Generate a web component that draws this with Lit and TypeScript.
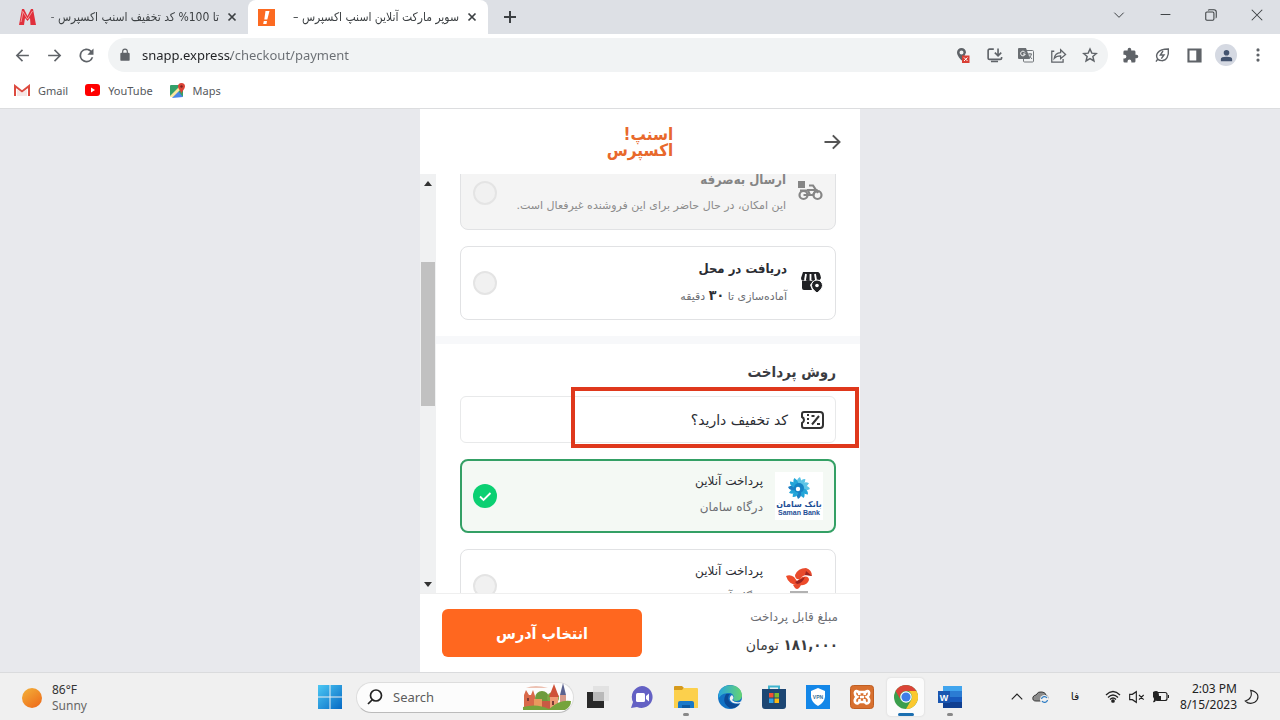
import { LitElement, html, css, svg } from "lit";
import { customElement, state } from "lit/decorators.js";
import { classMap } from "lit/directives/class-map.js";

const ui = css`
  :host {
    display: block;
    box-sizing: border-box;
    font-family: "Noto Sans", "DejaVu Sans", sans-serif;
    color: #3c4043;
  }
  * {
    box-sizing: border-box;
  }
  button {
    border: 0;
    padding: 0;
    background: none;
    color: inherit;
    font: inherit;
    display: grid;
    place-items: center;
    cursor: pointer;
  }
  svg {
    display: block;
  }
`;

const line = (d: string, size = 24, width = 2) => html`<svg
  width=${size}
  height=${size}
  viewBox="0 0 24 24"
  fill="none"
  stroke="currentColor"
  stroke-width=${width}
>
  <path d=${d} />
</svg>`;

const solid = (d: string, size = 24) => html`<svg
  width=${size}
  height=${size}
  viewBox="0 0 24 24"
  fill="currentColor"
>
  <path fill-rule="evenodd" d=${d} />
</svg>`;

@customElement("browser-chrome")
class BrowserChrome extends LitElement {
  static styles = [
    ui,
    css`
      .strip {
        display: flex;
        height: 34px;
        background: #dde0e5;
      }
      .tab {
        display: flex;
        align-items: center;
        gap: 7px;
        width: 240px;
        padding: 0 10px;
        font-family: "DejaVu Sans Condensed", "DejaVu Sans", sans-serif;
        font-size: 12px;
      }
      .tab.first {
        width: 248px;
        padding: 0 10px 0 18px;
      }
      .tab.active {
        background: #fff;
        border-radius: 8px 8px 0 0;
      }
      .tab-title {
        flex: 1;
        height: 34px;
        overflow: hidden;
        white-space: nowrap;
        direction: rtl;
        line-height: 34px;
        text-align: right;
        mask-image: linear-gradient(90deg, transparent, #000 12px);
      }
      .close {
        width: 12px;
        height: 24px;
      }
      .new-tab {
        width: 44px;
      }
      .window {
        display: flex;
        margin-left: auto;
      }
      .window button {
        width: 46px;
        height: 29px;
      }
      .bar {
        display: flex;
        align-items: center;
        height: 42px;
        padding: 0 6px;
        background: #fff;
        color: #5f6368;
      }
      .nav {
        width: 32px;
        height: 32px;
      }
      .omnibox {
        flex: 1;
        display: flex;
        align-items: center;
        height: 34px;
        margin: 0 6px;
        padding: 0 2px 0 10px;
        border-radius: 17px;
        background: #f1f3f4;
      }
      .url {
        flex: 1;
        min-width: 0;
        margin-left: 10px;
        padding: 0;
        border: 0;
        outline: 0;
        font: 13px "Noto Sans", sans-serif;
        color: transparent;
        background: linear-gradient(90deg, #202124 89px, #696d72 89px);
        background-clip: text;
        -webkit-background-clip: text;
      }
      .avatar {
        width: 22px;
        height: 22px;
        border-radius: 50%;
        background: #d5d9e2;
        color: #44546f;
        display: grid;
        place-items: center;
      }
      .bookmarks {
        display: flex;
        align-items: center;
        gap: 17px;
        height: 33px;
        padding: 0 14px 4px;
        border-bottom: 1px solid #dcdddf;
        background: #fff;
        font-size: 11px;
      }
      .bookmarks a {
        display: flex;
        align-items: center;
        gap: 8px;
        color: #55585c;
        text-decoration: none;
      }
    `,
  ];

  render() {
    const x = line("M5 5L19 19M19 5L5 19", 12, 3.4);
    return html`
      <div class="strip" role="tablist">
        <div class="tab first" role="tab" aria-selected="false">
          <svg width="19" height="18" viewBox="0 0 19 18">
            <path d="M1 17L4 1H6L9.500 8L13 1H15L18 17H12.500L12 10L9.500 13L7 10L6 17Z" fill="#e0303c" />
            <path d="M4.500 3L9.500 11L14.500 3M3 14L5 4" fill="none" stroke="#f6b0b0" stroke-width="0.800" />
          </svg>
          <span class="tab-title">تا 100% کد تخفیف اسنپ اکسپرس -</span>
          <button class="close" aria-label="Close tab">${x}</button>
        </div>
        <div class="tab active" role="tab" aria-selected="true">
          <svg width="17" height="17" viewBox="0 0 17 17">
            <rect width="17" height="17" fill="#fc6a21" />
            <path d="M7.500 2H11.500L9.300 10.500H6.300ZM5.800 12H9L8.500 15H5.200Z" fill="#fff" />
          </svg>
          <span class="tab-title">سوپر مارکت آنلاین اسنپ اکسپرس –</span>
          <button class="close" aria-label="Close tab">${x}</button>
        </div>
        <button class="new-tab" aria-label="New tab">${line("M12 3V21M3 12H21", 16, 3)}</button>
        <div class="window">
          <button aria-label="Search tabs">${line("M4 8L12 16L20 8", 14, 1.7)}</button>
          <button aria-label="Minimize">${line("M3 12H21", 13, 1.8)}</button>
          <button aria-label="Restore">
            ${line("M3 9Q3 7 5 7H15Q17 7 17 9V19Q17 21 15 21H5Q3 21 3 19ZM7 4Q8 3 9 3H17Q21 3 21 7V15Q21 17 20 17", 14, 1.8)}
          </button>
          <button aria-label="Close">${line("M3 3L21 21M21 3L3 21", 14, 1.8)}</button>
        </div>
      </div>
      <div class="bar">
        <button class="nav" aria-label="Back">${line("M21 12H4M12 4L4 12L12 20", 17, 2.2)}</button>
        <button class="nav" aria-label="Forward">${line("M3 12H20M12 4L20 12L12 20", 17, 2.2)}</button>
        <button class="nav" aria-label="Reload">
          ${solid("M17.650 6.350A8 8 0 1 0 19.730 14H17.650A6 6 0 1 1 12 6C13.660 6 15.140 6.690 16.220 7.780L13 11H20V4Z", 21)}
        </button>
        <div class="omnibox">
          ${solid("M18 8H17V6A5 5 0 0 0 7 6V8H6Q4 8 4 10V20Q4 22 6 22H18Q20 22 20 20V10Q20 8 18 8ZM9 8V6A3 3 0 0 1 15 6V8Z", 14)}
          <input class="url" aria-label="Address" value="snapp.express/checkout/payment" />
          <button class="nav" aria-label="Location blocked">
            <svg width="16" height="18" viewBox="0 0 16 18">
              <path fill="#5f6368" fill-rule="evenodd" d="M7.500 2A4.500 4.500 0 0 0 3 6.500C3 9.500 6 12.500 7.500 14.500L10 11L12 6.500A4.500 4.500 0 0 0 7.500 2ZM7.500 4.500A2 2 0 1 1 7.500 8.500A2 2 0 1 1 7.500 4.500Z" />
              <rect x="8" y="9.500" width="7.500" height="7.500" fill="#d93f35" />
              <path d="M10 11.500L13.500 15M13.500 11.500L10 15" stroke="#fff" />
            </svg>
          </button>
          <button class="nav" aria-label="Install">
            ${line("M11 3H5Q3 3 3 5V16Q3 17.500 5 17.500H20Q22 17.500 22 16V14M7 20.500H17M17 2V12M12.500 8L17 12.500L21.500 8", 17, 2.3)}
          </button>
          <button class="nav" aria-label="Translate">
            <svg width="16" height="16" viewBox="0 0 16 16">
              <rect x="5.500" y="3.500" width="10" height="11.500" rx="1" fill="#f1f3f4" stroke="#73777b" />
              <path d="M1 1H8L12 12H1Q0 12 0 11V2Q0 1 1 1Z" fill="#6a6e72" />
              <path d="M7 5.500A2.300 2.300 0 1 0 7.200 7H5" fill="none" stroke="#fff" />
              <path d="M9.500 7H14M12 6V7M13.500 7Q13 10 10.500 11.500M11 8.500L14 12" fill="none" stroke="#73777b" />
            </svg>
          </button>
          <button class="nav" aria-label="Share">
            ${line("M6 6H2.500V21.500H18.500V17M6 16Q7 8.500 15 8V4L22 10.500L15 16.500V12.500Q9 12.500 6 16Z", 17, 1.8)}
          </button>
          <button class="nav" aria-label="Bookmark">
            ${line("M12 3L14.700 9.200L21.500 9.800L16.300 14.300L17.900 21L12 17.400L6.100 21L7.700 14.300L2.500 9.800L9.300 9.200Z", 16, 2.2)}
          </button>
        </div>
        <button class="nav" aria-label="Extensions">
          ${solid("M20.500 11H19V7C19 5.900 18.100 5 17 5H13V3.500A2.500 2.500 0 0 0 8 3.500V5H4A2 2 0 0 0 2 7V10.800H3.500A2.700 2.700 0 0 1 3.500 16.200H2V20A2 2 0 0 0 4 22H7.800V20.500A2.700 2.700 0 0 1 13.200 20.500V22H17A2 2 0 0 0 19 20V16H20.500A2.500 2.500 0 0 0 20.500 11Z", 17)}
        </button>
        <button class="nav" aria-label="Energy saver">
          ${line("M3 22L5.500 18C2 13 4 3 21.500 3C22.500 13 19 21 11.500 20.500Q8 20.500 5.500 18M13.500 6L9.500 12H15L11 17.500", 16, 2.1)}
        </button>
        <button class="nav" aria-label="Side panel">
          ${solid("M2 2H22V22H2ZM5 5V19H14.500V5Z", 17)}
        </button>
        <button class="nav" aria-label="Profile">
          <span class="avatar">${solid("M12 3A4.500 4.500 0 1 1 12 12A4.500 4.500 0 1 1 12 3ZM3 21V17.500Q3 14 12 14T21 17.500V21Z", 15)}</span>
        </button>
        <button class="nav" aria-label="Menu">
          ${solid("M12 2A2.400 2.400 0 1 1 12 6.800A2.400 2.400 0 1 1 12 2ZM12 9.600A2.400 2.400 0 1 1 12 14.400A2.400 2.400 0 1 1 12 9.600ZM12 17.200A2.400 2.400 0 1 1 12 22A2.400 2.400 0 1 1 12 17.200Z", 16)}
        </button>
      </div>
      <nav class="bookmarks">
        <a href="#gmail">
          <svg width="16" height="12" viewBox="0 0 16 12">
            <path d="M1 12V2L8 7.500L15 2V12" fill="none" stroke="#dd4b40" stroke-width="2" />
            <path d="M3 5V12H13V5L8 9Z" fill="#f5e6e5" />
          </svg>
          Gmail
        </a>
        <a href="#youtube">
          <svg width="15" height="12" viewBox="0 0 15 12">
            <rect width="15" height="12" rx="3" fill="#f00" />
            <path d="M6 3.500L10 6L6 8.500Z" fill="#fff" />
          </svg>
          YouTube
        </a>
        <a href="#maps">
          <svg width="15" height="15" viewBox="0 0 15 15">
            <rect y="2" width="13" height="12" rx="1" fill="#34a06a" />
            <path d="M2 15L8 8L13 14Z" fill="#4a86e8" />
            <path d="M0 13L10 3L12 5L3 14H0Z" fill="#fbe7a0" />
            <path d="M11.500 0A3.500 3.500 0 0 1 15 3.500C15 6 12 8 11.500 10.500C11 8 8 6 8 3.500A3.500 3.500 0 0 1 11.500 0Z" fill="#dc4437" />
            <circle cx="11.500" cy="3.500" r="1.200" fill="#7b231e" />
          </svg>
          Maps
        </a>
      </nav>
    `;
  }
}

@customElement("checkout-panel")
class CheckoutPanel extends LitElement {
  @state() private gateway = "saman";

  static styles = [
    ui,
    css`
      :host {
        display: flex;
        flex-direction: column;
        direction: rtl;
        background: #fff;
        font-family: "DejaVu Sans", sans-serif;
        font-size: 12px;
        color: #2b2d33;
      }
      .head {
        display: grid;
        grid-template-columns: 40px 1fr 40px;
        align-items: center;
        height: 65px;
        padding: 0 8px;
        flex: none;
      }
      .back {
        width: 40px;
        height: 40px;
        color: #555;
      }
      .logo,
      .title,
      .sub b,
      .amount b,
      .go,
      h2 {
        font-family: "DejaVu Sans Condensed", "DejaVu Sans", sans-serif;
      }
      .logo {
        justify-self: center;
        color: #e8692c;
        font-size: 17px;
        font-weight: 700;
        line-height: 16px;
      }
      .middle {
        flex: 1;
        min-height: 0;
        display: flex;
      }
      .scroller {
        flex: 1;
        overflow: hidden;
      }
      .track {
        width: 16px;
        display: flex;
        flex-direction: column;
        align-items: center;
        background: #f0f1f2;
        color: #333;
      }
      .track button {
        width: 16px;
        height: 18px;
      }
      .before {
        flex: 70;
      }
      .thumb {
        flex: 143;
        width: 14px;
        background: #c1c1c1;
      }
      .after {
        flex: 169;
      }
      .group {
        display: grid;
        gap: 16px;
        padding: 0 24px 16px;
      }
      .group.pay {
        padding-top: 16px;
        border-top: 8px solid #f7f8fa;
      }
      h2 {
        margin: 0 0 -4px;
        font-size: 15px;
        line-height: 24px;
        color: #3a3c42;
      }
      .card {
        display: flex;
        align-items: center;
        gap: 12px;
        min-height: 74px;
        padding: 0 12px;
        border: 1px solid #e1e2e4;
        border-radius: 8px;
        background: #fff;
      }
      .card.off {
        background: #f4f4f4;
        color: #858585;
      }
      .card.chosen {
        padding: 0 11px;
        border: 2px solid #34a065;
        background: #f4f9f4;
      }
      .lines {
        flex: 1;
        display: grid;
        gap: 2px;
      }
      .title,
      .sub {
        line-height: 24px;
        white-space: nowrap;
      }
      .title {
        font-size: 13px;
        font-weight: 700;
      }
      .sub {
        font-size: 11px;
        color: #6c6e73;
      }
      .sub b {
        font-size: 14px;
        color: #2b2d33;
      }
      .off .sub {
        color: #8b8b8b;
      }
      .bank .lines {
        padding-bottom: 4px;
      }
      .bank .title {
        font-family: "DejaVu Sans", sans-serif;
        font-size: 12px;
        font-weight: 400;
      }
      .bank .sub {
        font-size: 12px;
      }
      input {
        appearance: none;
        width: 24px;
        height: 24px;
        margin: 0;
        border: 2px solid #e4e4e4;
        border-radius: 50%;
        background: #f1f1f1;
      }
      input:checked {
        border: 0;
        background: #0bd072
          url("data:image/svg+xml,%3Csvg xmlns='http://www.w3.org/2000/svg' viewBox='0 0 24 24'%3E%3Cpath d='M7 12.500L10.500 16L17.500 9' fill='none' stroke='white' stroke-width='1.800'/%3E%3C/svg%3E");
      }
      .coupon {
        position: relative;
      }
      .coupon button {
        display: flex;
        align-items: center;
        gap: 12px;
        width: 100%;
        height: 47px;
        padding: 0 11px;
        border: 1px solid #e8e9ea;
        border-radius: 6px;
        font-size: 14px;
        line-height: 20px;
        text-align: right;
      }
      .mark {
        position: absolute;
        top: -9px;
        right: -23px;
        bottom: -5px;
        left: 111px;
        border: 4px solid #df381c;
        pointer-events: none;
      }
      .tile {
        width: 48px;
        height: 48px;
        background: #fff;
        display: grid;
        place-content: center;
        justify-items: center;
        color: #1f4f96;
        font-size: 8px;
        font-weight: 700;
        line-height: 9px;
      }
      .tile small {
        font: 700 7px/8px "Liberation Sans", sans-serif;
      }
      .foot {
        flex: none;
        display: flex;
        align-items: center;
        justify-content: space-between;
        height: 79px;
        padding: 0 22px;
        border-top: 1px solid #efefef;
      }
      .total {
        display: grid;
        gap: 4px;
        padding-bottom: 4px;
        line-height: 24px;
        color: #6c6e73;
      }
      .amount {
        font-size: 14px;
        color: #3a3c40;
      }
      .amount b {
        font-size: 15px;
      }
      .go {
        width: 200px;
        height: 48px;
        border-radius: 6px;
        background: #ff671f;
        color: #fff;
        font-size: 16px;
        font-weight: 700;
      }
    `,
  ];

  firstUpdated() {
    this.renderRoot.querySelector(".scroller")!.scrollTop = 18;
  }

  private bank(id: string, name: string, picture: unknown) {
    const on = this.gateway === id;
    return html`<label class=${classMap({ card: true, bank: true, chosen: on })}>
      ${picture}
      <span class="lines">
        <span class="title">پرداخت آنلاین</span>
        <span class="sub">${name}</span>
      </span>
      <input type="radio" name="gateway" .checked=${on} @change=${() => (this.gateway = id)} />
    </label>`;
  }

  render() {
    const petals = Array.from({ length: 12 }, (_, i) => i * 30);
    const saman = html`<span class="tile">
      <svg width="24" height="24" viewBox="0 0 24 24">
        ${petals.map(
          (a, i) => svg`<path d="M10 8Q9 3 13 1Q15 4 14 8Z" fill=${i < 4 ? "#5cc4e6" : i % 3 ? "#24a5d8" : "#1c7fc5"} transform="rotate(${a} 12 12)" />`
        )}
        <circle cx="12" cy="12" r="5" fill="#1583c5" />
        <circle cx="11" cy="13" r="2.200" fill="#fff" />
      </svg>
      <span>بانک سامان</span>
      <small dir="ltr">Saman Bank</small>
    </span>`;
    const ap = html`<span class="tile">
      <svg width="28" height="36" viewBox="0 0 28 36">
        <path d="M10 7Q13 0 21 0Q27 2 27 8Q19 5 15 11Q10 12 10 7Z" fill="#e84a2c" />
        <path d="M1 8Q5 6 9 9L12 13L17 9Q24 7 24 12Q22 18 15 17Q4 18 1 8Z" fill="#ed4b2a" />
        <path d="M10 14L20 9Q17 16 12 16ZM21 3L27 8L20 7Z" fill="#9c2420" />
        <path d="M8 17Q12 15 16 17Q13 23 10 20Z" fill="#e84a2c" />
        <path d="M5 24H23" stroke="#999" stroke-width="1.500" />
      </svg>
    </span>`;
    return html`
      <header class="head">
        <button class="back" aria-label="بازگشت">${line("M3 12H21M13 4L21 12L13 20", 20, 2.4)}</button>
        <span class="logo">اسنپ!<br />اکسپرس</span>
      </header>
      <div class="middle">
        <div class="scroller">
          <div class="group">
            <label class="card off">
              <svg width="25" height="24" viewBox="0 0 25 24" fill="none" stroke="#858585" stroke-width="2.200">
                <path d="M0 0H7V7H0Z" fill="#858585" stroke="none" />
                <circle cx="5.500" cy="14" r="4" />
                <circle cx="19.500" cy="14" r="4" />
                <path d="M11 4.500H15L20 12M2 9.500H10L12 14H15L18 9L9 9M5.500 14H12" />
              </svg>
              <span class="lines">
                <span class="title">ارسال به‌صرفه</span>
                <span class="sub">این امکان، در حال حاضر برای این فروشنده غیرفعال است.</span>
              </span>
              <input type="radio" name="delivery" disabled />
            </label>
            <label class="card">
              <svg width="24" height="26" viewBox="0 0 24 26">
                <path d="M4 2H19Q21 2 22 8Q21 11 18 10Q15 12 12 10Q9 12 6 10Q2 12 2 8Z" fill="#202124" />
                <path d="M3 11H14L11 15L13 20H5Q3 20 3 18Z" fill="#202124" />
                <path d="M7 4L6 10M11.500 4V10M16 4L17 10" stroke="#fff" stroke-width="1.800" />
                <path d="M18 10A5.500 5.500 0 0 1 23.500 15.500C23.500 19 20 21 18 23C16 21 12.500 19 12.500 15.500A5.500 5.500 0 0 1 18 10Z" fill="#202124" stroke="#fff" />
                <circle cx="18" cy="15.500" r="1.800" fill="#fff" />
              </svg>
              <span class="lines">
                <span class="title">دریافت در محل</span>
                <span class="sub">آماده‌سازی تا <b>۳۰</b> دقیقه</span>
              </span>
              <input type="radio" name="delivery" />
            </label>
          </div>
          <div class="group pay">
            <h2>روش پرداخت</h2>
            <div class="coupon">
              <button>
                <svg width="24" height="18" viewBox="0 0 24 18" fill="none" stroke="#333" stroke-width="2">
                  <path d="M4 1H20Q23 1 23 4V14Q23 17 20 17H4Q2 17 2 15V12Q4 11 4 9T2 6V3Q2 1 4 1Z" />
                  <path d="M8 3V15" stroke-dasharray="2 2" />
                  <path d="M19 5L12 13.500M11.500 5H14.500M17 13H20" />
                </svg>
                کد تخفیف دارید؟
              </button>
              <div class="mark"></div>
            </div>
            ${this.bank("saman", "درگاه سامان", saman)} ${this.bank("ap", "درگاه آپ", ap)}
          </div>
        </div>
        <div class="track">
          <button aria-label="بالا">
            <svg width="8" height="5" viewBox="0 0 8 5"><path d="M0 5L4 0L8 5Z" fill="#333" /></svg>
          </button>
          <div class="before"></div>
          <div class="thumb"></div>
          <div class="after"></div>
          <button aria-label="پایین">
            <svg width="8" height="5" viewBox="0 0 8 5"><path d="M0 0L4 5L8 0Z" fill="#333" /></svg>
          </button>
        </div>
      </div>
      <footer class="foot">
        <div class="total">
          <span>مبلغ قابل پرداخت</span>
          <span class="amount"><b>۱۸۱,۰۰۰</b> تومان</span>
        </div>
        <button class="go">انتخاب آدرس</button>
      </footer>
    `;
  }
}

@customElement("task-bar")
class TaskBar extends LitElement {
  static styles = [
    ui,
    css`
      :host {
        display: grid;
        grid-template-columns: 1fr auto 1fr;
        height: 48px;
        border-top: 1px solid #dadbdd;
        background: #f0f0f0;
        font-size: 12px;
        line-height: 16px;
      }
      .weather {
        display: flex;
        align-items: center;
        gap: 10px;
        padding: 2px 22px 0;
      }
      .temp,
      .sky {
        display: block;
      }
      .temp {
        color: #333;
      }
      .sky {
        color: #666;
      }
      .apps {
        display: flex;
        align-items: center;
      }
      .app {
        position: relative;
        width: 44px;
        height: 47px;
      }
      .open::after {
        content: "";
        position: absolute;
        bottom: 4px;
        width: 6px;
        height: 3px;
        border-radius: 2px;
        background: #888;
      }
      .current::before {
        content: "";
        position: absolute;
        inset: 5px 4px 4px 3px;
        border-radius: 4px;
        background: #fbfbfb;
        box-shadow: 0 0 2px #ccc;
      }
      .current::after {
        width: 16px;
        background: #1c6fb0;
      }
      .app svg {
        position: relative;
      }
      .search {
        display: flex;
        align-items: center;
        gap: 10px;
        width: 218px;
        height: 31px;
        margin: 1px 2px 0 4px;
        padding: 0 1px 0 10px;
        border: 1px solid #ddd;
        border-bottom-color: #bbb;
        border-radius: 16px;
        background: #fcfcfc;
      }
      .search input {
        flex: 1;
        min-width: 0;
        padding: 0;
        border: 0;
        outline: 0;
        background: none;
        font: 13px "Noto Sans", sans-serif;
      }
      .search input::placeholder {
        color: #5c5c5c;
        opacity: 1;
      }
      .tray {
        display: flex;
        align-items: center;
        justify-content: flex-end;
        padding: 0 20px 0 0;
        color: #222;
      }
      .tray button {
        width: 24px;
        height: 40px;
      }
      .lang {
        width: 44px;
        font-family: "DejaVu Sans", sans-serif;
        font-size: 11px;
        text-align: center;
        margin-right: 4px;
      }
      .clock {
        width: 64px;
        text-align: right;
        white-space: nowrap;
      }
      .tray .moon {
        width: 16px;
        margin-left: 7px;
      }
    `,
  ];

  private app(name: string, art: unknown, mode = "") {
    return html`<button
      class=${classMap({ app: true, open: mode !== "", current: mode === "current" })}
      aria-label=${name}
    >
      <svg width="24" height="24" viewBox="0 0 24 24">${art}</svg>
    </button>`;
  }

  render() {
    return html`
      <div class="weather">
        <svg width="20" height="20" viewBox="0 0 20 20">
          <defs>
            <linearGradient id="sun" x2="0.700" y2="1"><stop stop-color="#f3b33a" /><stop offset="1" stop-color="#ee6f1c" /></linearGradient>
          </defs>
          <circle cx="10" cy="10" r="10" fill="url(#sun)" />
        </svg>
        <div><span class="temp">86°F</span><span class="sky">Sunny</span></div>
      </div>
      <div class="apps">
        ${this.app("Start", svg`
          <defs><linearGradient id="win" x2="1" y2="1"><stop stop-color="#4cc8f4" /><stop offset="1" stop-color="#0669c4" /></linearGradient></defs>
          <path fill="url(#win)" d="M0 0H11.500V11.500H0ZM12.500 0H24V11.500H12.500ZM0 12.500H11.500V24H0ZM12.500 12.500H24V24H12.500Z" />`)}
        <div class="search">
          <svg width="16" height="16" viewBox="0 0 16 16" fill="none" stroke="#222" stroke-width="1.700">
            <circle cx="9" cy="6.500" r="5.500" /><path d="M5.500 10.500L1 15" />
          </svg>
          <input aria-label="Search" placeholder="Search" />
          <svg width="50" height="28" viewBox="0 0 50 28">
            <path d="M4 5Q13 1 26 5Z" fill="#ecc1b2" />
            <circle cx="20" cy="15" r="7" fill="#6d9b3c" /><circle cx="31" cy="15" r="6" fill="#7fa845" />
            <path d="M2 12L4 7L7 12H9L11 7L13 13V25H2Z" fill="#d9694a" />
            <path d="M12 16H20V25H12Z" fill="#e89a5e" /><path d="M20 18H29V26H20Z" fill="#c85a44" />
            <path d="M27 14L32 1L37 14Z" fill="#cf5238" /><path d="M28 14H36V27H28Z" fill="#ef9b74" />
            <path d="M38 12L41 0L44 12Z" fill="#5b6390" /><path d="M38 12H44V25H38Z" fill="#d79a8a" />
            <path d="M1 24Q15 20 27 26Q38 16 49 18Q49 24 43 27H1Z" fill="#76a33c" />
            <path d="M30 18H32V22H30ZM5 15H7V18H5Z" fill="#7c3a35" />
          </svg>
        </div>
        ${this.app("Task view", svg`<path d="M7 1H23V16H7Z" fill="#e2e2e2" /><path d="M1 7H7V16H18V23H1Z" fill="#292929" /><path d="M7 7H18V16H7Z" fill="#b9b9b9" />`)}
        ${this.app("Chat", svg`
          <path d="M12 1A11 11 0 1 1 7 22L1 23L3 17A11 11 0 0 1 12 1Z" fill="#6461c4" />
          <rect x="6" y="8" width="9" height="9" rx="1.500" fill="#fff" /><path d="M16 11L19 8.500V16.500L16 14Z" fill="#fff" />`)}
        ${this.app("File Explorer", svg`
          <path d="M0 2Q0 1 1 1H8L10 3L8 6H0Z" fill="#d69a1c" /><path d="M0 5H8L10 3H23Q24 3 24 4V23H0Z" fill="#fcd04c" />
          <path d="M4 23V18Q4 16 6 16H18Q20 16 20 18V23Z" fill="#1978c8" /><path d="M8 20H16V23H8Z" fill="#0c58a0" />`, "open")}
        ${this.app("Edge", svg`
          <defs><linearGradient id="edge" x2="1"><stop stop-color="#27a5df" /><stop offset="1" stop-color="#66d471" /></linearGradient></defs>
          <circle cx="12" cy="12" r="12" fill="#1272c4" />
          <path d="M0.500 10C2-3 23-3 24 10C24 16 18 17 15 15C17 12 15 8 11 8C6 8 2 10 0.500 14Z" fill="url(#edge)" />
          <path d="M8 9Q3 18 12 23Q19 24 22 18Q15 21 11 16Q9 12 12 9Z" fill="#0c4a96" />
          <path d="M14 10Q17 13 14 15Q17 18 22 17L24 15L23 18Q15 20 12 15Q11 12 14 10Z" fill="#f0f0f0" />`)}
        ${this.app("Store", svg`
          <path d="M7 5V1.500H17V5" fill="none" stroke="#3fb4cf" stroke-width="2" />
          <path d="M0 4H24V21Q24 24 21 24H3Q0 24 0 21Z" fill="#1c4673" />
          <path d="M7 8H11.500V12.500H7Z" fill="#f05133" /><path d="M12.500 8H17V12.500H12.500Z" fill="#7fba2f" />
          <path d="M7 13.500H11.500V18H7Z" fill="#2fa4e8" /><path d="M12.500 13.500H17V18H12.500Z" fill="#fcb913" />`)}
        ${this.app("VPN", svg`
          <rect width="24" height="24" fill="#1487e8" /><path d="M12 3L19 6V12Q18 18 12 21Q6 18 5 12V6Z" fill="#fff" />
          <text x="12" y="14" text-anchor="middle" font-family="Liberation Sans, sans-serif" font-size="5" font-weight="700" fill="#3b6f96">VPN</text>`)}
        ${this.app("XAMPP", svg`
          <rect x="0.500" y="0.500" width="23" height="23" rx="3" fill="#d8702f" stroke="#bf5e22" />
          <path d="M10 12H14M9.500 10C9 5 4 5 5 9Q5 11 7 12Q4 14 5 17C7 20 10 18 9.500 14M14.500 10C15 5 20 5 19 9Q19 11 17 12Q20 14 19 17C17 20 14 18 14.500 14M9 7H15M9 17H15" fill="none" stroke="#fff" stroke-width="2.600" />`)}
        ${this.app("Chrome", svg`
          <circle cx="12" cy="12" r="12" fill="#3b9e4c" />
          <path d="M12 0A12 12 0 0 1 22.400 6H12A6 6 0 0 0 6.800 15L1.600 6A12 12 0 0 1 12 0Z" fill="#db4437" />
          <path d="M22.400 6A12 12 0 0 1 12 24L17.200 15A6 6 0 0 0 17 8.500L15 6Z" fill="#fbc82f" />
          <circle cx="12" cy="12" r="5.800" fill="#fff" /><circle cx="12" cy="12" r="4.600" fill="#3f7de8" />`, "current")}
        ${this.app("Word", svg`
          <path d="M5 1H24V7H5Z" fill="#41a5ee" /><path d="M5 6H24V12H5Z" fill="#2b7cd3" /><path d="M5 12H24V18H5Z" fill="#185abd" /><path d="M5 17H24V23H5Z" fill="#103f91" />
          <rect y="6" width="12" height="12" fill="#1a56b0" />
          <text x="6" y="15.500" text-anchor="middle" font-family="Liberation Sans, sans-serif" font-size="9" font-weight="700" fill="#fff">W</text>`, "open")}
      </div>
      <div class="tray">
        <button aria-label="Hidden icons">${line("M3 16L12 7L21 16", 14, 2)}</button>
        <button aria-label="OneDrive">
          <svg width="18" height="14" viewBox="0 0 18 14">
            <path d="M4 11Q0 11 1 7Q2 5 4 5Q6 1 10 2Q13 2 14 5Q17 6 16 10L8 11Z" fill="#8b8b8b" stroke="#3a3a3a" />
            <circle cx="12.500" cy="9.500" r="4.500" fill="#f0f0f0" />
            <path d="M9.500 9A3 3 0 0 1 15 8M15.500 10A3 3 0 0 1 10 11" fill="none" stroke="#2d7cc4" stroke-width="1.300" />
          </svg>
        </button>
        <span class="lang">فا</span>
        <button aria-label="Network">
          <svg width="16" height="13" viewBox="0 0 16 13" fill="none" stroke="#222" stroke-width="1.300">
            <path d="M1 5Q8-2 15 5M3 7.500Q8 2.500 13 7.500M5 9.500Q8 6.500 11 9.500" /><circle cx="8" cy="11" r="1.200" fill="#222" />
          </svg>
        </button>
        <button aria-label="Muted">${line("M1 8V16H5L11 20V4L5 8ZM15 9L22 16M22 9L15 16", 16, 1.700)}</button>
        <button aria-label="Battery">
          <svg width="18" height="13" viewBox="0 0 18 13">
            <rect x="3" y="2.500" width="12" height="8" rx="2" fill="none" stroke="#222" stroke-width="1.200" />
            <path d="M16 5H17V8H16Z" fill="#222" /><path d="M1 2Q7-1 7 6H9V10H4Q3 13 1 12Q3 9 1 7Z" fill="#222" />
          </svg>
        </button>
        <time class="clock">2:03 PM<br />8/15/2023</time>
        <button class="moon" aria-label="Focus">${line("M10 2Q14 14 2 18Q8 24 16 20Q23 15 20 8Q17 3 10 2Z", 16, 1.700)}</button>
      </div>
    `;
  }
}

@customElement("app-root")
class AppRoot extends LitElement {
  static styles = css`
    :host {
      display: flex;
      flex-direction: column;
      height: 100vh;
      overflow: hidden;
      background: #e8e9ed;
    }
    main {
      flex: 1;
      min-height: 0;
      display: flex;
      justify-content: center;
    }
    checkout-panel {
      width: 100%;
      max-width: 440px;
    }
  `;

  render() {
    return html`
      <browser-chrome></browser-chrome>
      <main><checkout-panel></checkout-panel></main>
      <task-bar></task-bar>
    `;
  }
}
